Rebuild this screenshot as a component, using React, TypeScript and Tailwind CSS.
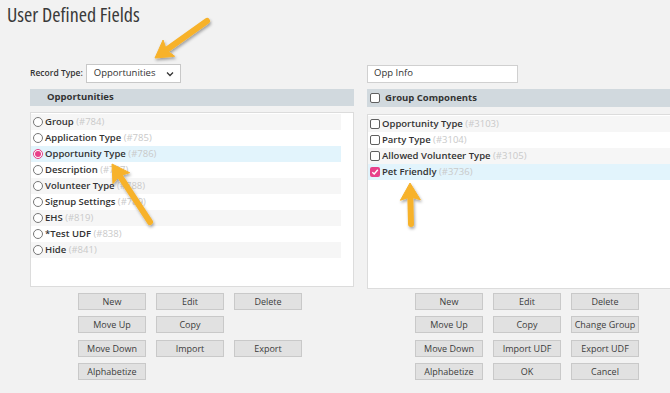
import React from 'react';

type Item = { name: string; id: string };

const leftItems: Item[] = [
  { name: 'Group', id: '#784' },
  { name: 'Application Type', id: '#785' },
  { name: 'Opportunity Type', id: '#786' },
  { name: 'Description', id: '#787' },
  { name: 'Volunteer Type', id: '#788' },
  { name: 'Signup Settings', id: '#789' },
  { name: 'EHS', id: '#819' },
  { name: '*Test UDF', id: '#838' },
  { name: 'Hide', id: '#841' },
];

const rightItems: Item[] = [
  { name: 'Opportunity Type', id: '#3103' },
  { name: 'Party Type', id: '#3104' },
  { name: 'Allowed Volunteer Type', id: '#3105' },
  { name: 'Pet Friendly', id: '#3736' },
];

const leftButtons = ['New', 'Edit', 'Delete', 'Move Up', 'Copy', '', 'Move Down', 'Import', 'Export', 'Alphabetize', '', ''];
const rightButtons = ['New', 'Edit', 'Delete', 'Move Up', 'Copy', 'Change Group', 'Move Down', 'Import UDF', 'Export UDF', 'Alphabetize', 'OK', 'Cancel'];

const Radio = ({ on }: { on?: boolean }) => (
  <span
    className={`w-[10px] h-[10px] rounded-full border flex items-center justify-center shrink-0 bg-white ${
      on ? 'border-[#e23c84]' : 'border-[#777]'
    }`}
  >
    {on && <span className="w-[6px] h-[6px] rounded-full bg-[#e8408a]" />}
  </span>
);

const Check = ({ on }: { on?: boolean }) =>
  on ? (
    <span className="w-[10px] h-[10px] rounded-[2px] bg-[#e8408a] flex items-center justify-center shrink-0">
      <svg width="8" height="8" viewBox="0 0 8 8">
        <path d="M1.3 4.2 L3.2 6 L6.8 1.8" fill="none" stroke="white" strokeWidth="1.4" />
      </svg>
    </span>
  ) : (
    <span className="w-[10px] h-[10px] rounded-[2px] border border-[#5f5f5f] bg-white shrink-0" />
  );

const ButtonGrid = ({ labels }: { labels: string[] }) => (
  <div className="grid grid-cols-[68px_68px_68px] gap-x-[10px] gap-y-[6.4px] ml-[48px] mt-[6px]">
    {labels.map((l, i) =>
      l ? (
        <div
          key={i}
          className="h-[17px] bg-[#e1e1e1] border border-[#c9c9c9] flex items-center justify-center text-[9px] text-[#3c3c3c]"
        >
          {l}
        </div>
      ) : (
        <div key={i} className="h-[17px]" />
      )
    )}
  </div>
);

const Arrow = ({ x1, y1, x2, y2 }: { x1: number; y1: number; x2: number; y2: number }) => {
  const dx = x2 - x1;
  const dy = y2 - y1;
  const len = Math.hypot(dx, dy);
  const ux = dx / len;
  const uy = dy / len;
  const px = -uy;
  const py = ux;
  const head = 17;
  const hw = 10;
  const bx = x2 - ux * head;
  const by = y2 - uy * head;
  const pts = `${x2},${y2} ${bx + px * hw},${by + py * hw} ${bx + ux * 3},${by + uy * 3} ${bx - px * hw},${by - py * hw}`;
  return (
    <g filter="url(#shadow)">
      <line x1={x1} y1={y1} x2={bx + ux * 4} y2={by + uy * 4} stroke="#f7b22c" strokeWidth="6" strokeLinecap="round" />
      <polygon points={pts} fill="#f7b22c" strokeLinejoin="round" stroke="#f7b22c" strokeWidth="1" />
    </g>
  );
};

const App = () => {
  return (
    <div className="relative w-[670px] h-[393px] overflow-hidden bg-[#f2f2f2] font-['Open_Sans',sans-serif] [font-stretch:90%] text-[#333]">
      <h1 className="text-[20px] leading-[26px] pt-[2px] pl-[7px] text-[#3a3a3a] [font-stretch:85%]">User Defined Fields</h1>

      <div className="flex mt-[36px]">
        {/* left column */}
        <div className="w-[324px] ml-[30px] shrink-0">
          <div className="flex items-center h-[19px]">
            <span className="text-[8.5px] font-semibold text-[#333] mr-[3px]">Record Type:</span>
            <div className="w-[95px] h-[19px] bg-white border border-[#c8c8c8] flex items-center justify-between pl-[7px] pr-[6px] text-[9.5px] text-[#333]">
              <span>Opportunities</span>
              <svg width="8" height="6" viewBox="0 0 8 6">
                <path d="M1 1.5 L4 4.5 L7 1.5" fill="none" stroke="#333" strokeWidth="1.3" />
              </svg>
            </div>
          </div>

          <div className="mt-[6px] h-[17px] bg-[#d1d9de] flex items-center pl-[17px] text-[9.5px] font-bold text-[#333]">
            Opportunities
          </div>

          <div className="mt-[6px] h-[175px] bg-white border border-[#dcdcdc] pt-[1px]">
            {leftItems.map((it, i) => {
              const sel = i === 2;
              return (
                <div
                  key={it.name}
                  className={`h-[16px] w-[310px] flex items-center gap-[2px] pl-[2px] ${
                    sel ? 'bg-[#e2f4fc]' : i % 2 === 0 ? 'bg-[#f6f6f6]' : 'bg-white'
                  }`}
                >
                  <Radio on={sel} />
                  <span className="text-[9.5px] font-semibold text-[#333] whitespace-nowrap">
                    {it.name} <span className="font-normal text-[#c9c9c9]">({it.id})</span>
                  </span>
                </div>
              );
            })}
          </div>

          <ButtonGrid labels={leftButtons} />
        </div>

        {/* right column */}
        <div className="w-[330px] ml-[13px] shrink-0">
          <div className="h-[19px] flex items-center">
            <div className="w-[151px] h-[18px] bg-white border border-[#d0d0d0] flex items-center px-[6px] text-[9.5px] text-[#333]">
              Opp Info
            </div>
          </div>

          <div className="mt-[6px] h-[18px] bg-[#d1d9de] flex items-center pl-[3px] gap-[5px] text-[9.5px] font-bold text-[#333]">
            <Check />
            Group Components
          </div>

          <div className="mt-[7px] h-[175px] bg-white border border-[#dcdcdc] pt-[1px]">
            {rightItems.map((it, i) => {
              const sel = i === 3;
              return (
                <div
                  key={it.name}
                  className={`h-[16px] flex items-center gap-[2px] pl-[2px] ${
                    sel ? 'bg-[#e2f4fc]' : i % 2 === 0 ? 'bg-[#f6f6f6]' : 'bg-white'
                  }`}
                >
                  <Check on={sel} />
                  <span className="text-[9.5px] font-semibold text-[#333] whitespace-nowrap">
                    {it.name} <span className="font-normal text-[#c9c9c9]">({it.id})</span>
                  </span>
                </div>
              );
            })}
          </div>

          <div className="-mt-[2px]">
            <ButtonGrid labels={rightButtons} />
          </div>
        </div>
      </div>

      {/* callout arrows */}
      <svg className="absolute inset-0 pointer-events-none" width="670" height="393">
        <defs>
          <filter id="shadow" x="-20%" y="-20%" width="140%" height="140%">
            <feDropShadow dx="1" dy="2" stdDeviation="1.5" floodColor="#000" floodOpacity="0.35" />
          </filter>
        </defs>
        <Arrow x1={207} y1={21} x2={155} y2={58} />
        <Arrow x1={150} y1={222} x2={112} y2={164} />
        <Arrow x1={411} y1={224} x2={410} y2={183} />
      </svg>
    </div>
  );
};

export default App;
